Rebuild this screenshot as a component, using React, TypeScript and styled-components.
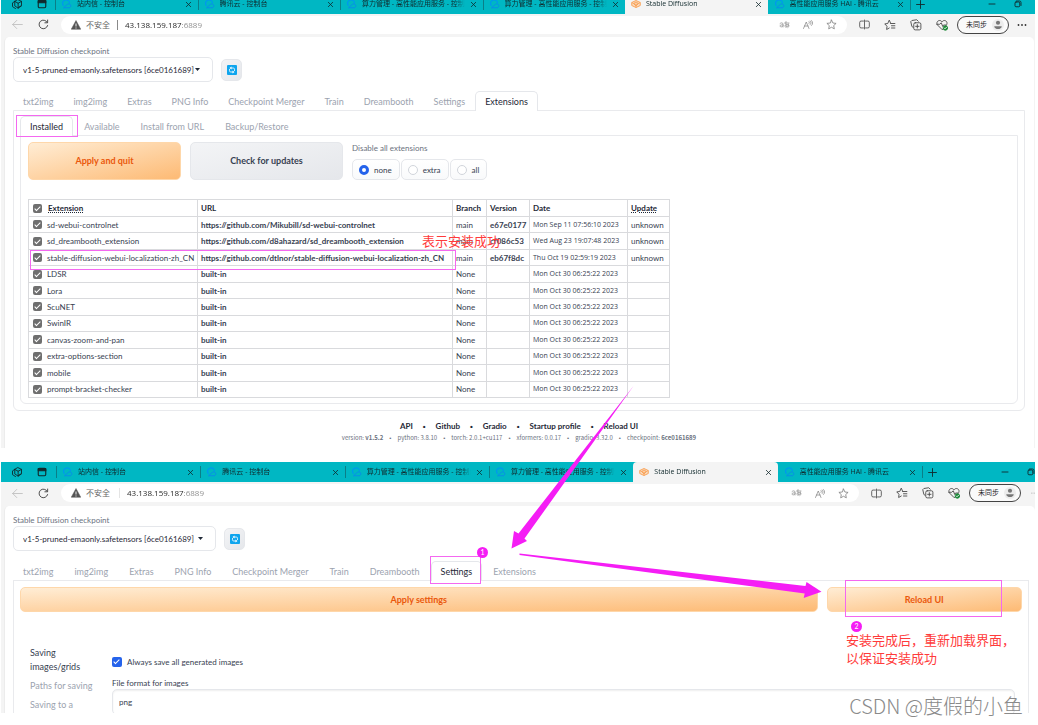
import React from "react";
import styled, { createGlobalStyle, css } from "styled-components";

const GlobalStyle = createGlobalStyle`
  *, *::before, *::after { box-sizing: border-box; }
  body { margin: 0; background: #fff; }
  button, input, select { font: inherit; color: inherit; margin: 0; padding: 0; border: 0; background: none; }
  a { color: inherit; text-decoration: none; }
`;

const uiFont = `Lato, "Noto Sans CJK SC", sans-serif`;
const noteFont = `"Noto Sans CJK SC", sans-serif`;
const chromeFont = `"Open Sans", "Noto Sans CJK SC", sans-serif`;

/* ---------- page ---------- */

const Page = styled.main`
  position: relative;
  display: flex;
  flex-direction: column;
  gap: 14px;
  padding: 0 3px 12px 1px;
  overflow: hidden;
  font-family: ${uiFont};
  color: #374151;
`;

const BrowserWindow = styled.section<{ $clip?: boolean }>`
  display: flex;
  flex-direction: column;
  background: #f4f4f4;
  overflow: hidden;
  ${(p) => p.$clip && css`height: 251px;`}
  & > * { flex: none; }
`;

/* ---------- browser chrome ---------- */

const TabStrip = styled.div<{ $cut?: boolean }>`
  display: flex;
  align-items: center;
  height: 20px;
  margin-top: ${(p) => (p.$cut ? "-6px" : "0")};
  background: #00b7c3;
  font-family: ${chromeFont};
  font-size: 7px;
  color: #10292c;
`;

const StripIcons = styled.div<{ $wide?: boolean }>`
  display: flex;
  align-items: center;
  gap: 14px;
  width: ${(p) => (p.$wide ? "55px" : "54px")};
  padding-left: 10px;
  flex: none;
`;

const TabList = styled.div<{ $wide?: boolean }>`
  display: grid;
  grid-template-columns: repeat(6, 1fr);
  width: ${(p) => (p.$wide ? "866px" : "855px")};
  height: 100%;
  flex: none;
`;

const BrowserTab = styled.div<{ $active?: boolean; $plain?: boolean }>`
  position: relative;
  display: flex;
  align-items: center;
  gap: 5px;
  min-width: 0;
  padding: 0 6px;
  ${(p) => p.$active && css`background: #f4f4f4; border-radius: 4px 4px 0 0;`}
  ${(p) => !p.$active && !p.$plain && css`
    &::before {
      content: "";
      position: absolute;
      left: 0;
      top: 4px;
      width: 1px;
      height: 12px;
      background: #0a7f88;
    }
  `}
`;

const TabTitle = styled.span`
  flex: 1;
  min-width: 0;
  overflow: hidden;
  white-space: nowrap;
  line-height: 12px;
  mask-image: linear-gradient(to right, #000 90%, transparent);
`;

const GlyphButton = styled.button`
  display: inline-flex;
  align-items: center;
  justify-content: center;
  flex: none;
  padding: 0;
  line-height: 0;
`;

const WindowButtons = styled.div<{ $wide?: boolean }>`
  display: flex;
  align-items: center;
  flex: 1;
  min-width: 0;
  border-left: 1px solid #0a7f88;
  height: 12px;
  padding: 0 ${(p) => (p.$wide ? "0" : "13px")} 0 5px;
  gap: 18px;
`;

const Spacer = styled.span`
  flex: 1;
`;

const Toolbar = styled.div<{ $wide?: boolean }>`
  display: flex;
  align-items: center;
  height: ${(p) => (p.$wide ? "24px" : "23px")};
  padding: 0 ${(p) => (p.$wide ? "0" : "8px")} 2px 11px;
  font-family: ${chromeFont};
  color: #4a4a4a;
`;

const NavButtons = styled.div`
  display: flex;
  align-items: center;
  gap: 15px;
  width: 49px;
  flex: none;
`;

const AddressBar = styled.div`
  display: flex;
  align-items: center;
  flex: 1;
  min-width: 0;
  height: 18px;
  padding: 0 10px;
  border-radius: 9px;
  background: #fff;
  font-size: 8px;
  line-height: 12px;
`;

const Insecure = styled.span<{ $faint?: boolean }>`
  display: flex;
  align-items: center;
  gap: 5px;
  padding-right: ${(p) => (p.$faint ? "9px" : "7px")};
  margin-right: 7px;
  border-right: 1px solid ${(p) => (p.$faint ? "#e4e4e4" : "#8a8a8a")};
  height: 10px;
  color: #666;
  white-space: nowrap;
`;

const UrlInput = styled.input`
  flex: 1;
  min-width: 0;
  outline: none;
  color: transparent;
  background: linear-gradient(to right, #222 57px, #8a8a8a 57px);
  background-clip: text;
  -webkit-background-clip: text;
`;

const AddressIcons = styled.div`
  display: flex;
  align-items: center;
  gap: 13px;
  color: #777;
`;

const ToolIcons = styled.div`
  display: flex;
  align-items: center;
  gap: 14px;
  padding: 0 9px 0 12px;
`;

const ProfileButton = styled.button`
  display: flex;
  align-items: center;
  justify-content: space-between;
  width: 52px;
  height: 18px;
  padding: 0 4px 0 8px;
  border: 1px solid #444;
  border-radius: 9px;
  font-size: 7px;
  line-height: 10px;
  color: #222;
  background: #fafafa;
  white-space: nowrap;
  flex: none;
`;

const MoreSlot = styled.span<{ $wide?: boolean }>`
  display: flex;
  margin-left: ${(p) => (p.$wide ? "10px" : "8px")};
  width: ${(p) => (p.$wide ? "4px" : "10px")};
  overflow: hidden;
  flex: none;
`;

/* ---------- web page ---------- */

const Card = styled.div<{ $wide?: boolean }>`
  display: flex;
  flex-direction: column;
  margin: 0 ${(p) => (p.$wide ? "0" : "1px")} 0 3px;
  padding: 8px ${(p) => (p.$wide ? "6px" : "9px")} 0 8px;
  border-left: 1px solid #ececec;
  border-radius: 5px 5px 0 0;
  background: #fff;
`;

const FieldLabel = styled.label`
  display: block;
  font-size: 8px;
  line-height: 12px;
  color: #6b7280;
`;

const CheckpointRow = styled.div<{ $wide?: boolean }>`
  display: flex;
  align-items: center;
  gap: 8px;
  margin-bottom: ${(p) => (p.$wide ? "10px" : "9px")};
`;

const SelectBox = styled.span<{ $wide?: boolean }>`
  display: flex;
  align-items: center;
  width: ${(p) => (p.$wide ? "203px" : "200px")};
  height: 25px;
  padding: 0 12px 0 9px;
  border: 1px solid #e5e7eb;
  border-radius: 5px;
  background: #fff;
`;

const CheckpointSelect = styled.select`
  flex: 1;
  min-width: 0;
  appearance: none;
  outline: none;
  font-size: 8px;
  line-height: 14px;
  color: #1f2937;
`;

const RefreshButton = styled.button`
  display: flex;
  align-items: center;
  justify-content: center;
  width: 21px;
  height: 22px;
  border: 1px solid #e5e7eb;
  border-radius: 5px;
  background: linear-gradient(to bottom right, #f3f4f6, #e5e7eb);
`;

const TabBar = styled.div<{ $gap?: number }>`
  position: relative;
  display: flex;
  gap: ${(p) => p.$gap ?? 0}px;
  height: 20px;
  margin-bottom: -1px;
`;

const TabButton = styled.button<{ $active?: boolean }>`
  padding: 0 9px;
  border: 1px solid transparent;
  border-bottom: 0;
  border-radius: 5px 5px 0 0;
  font-size: 9px;
  line-height: 18px;
  white-space: nowrap;
  color: #9ca3af;
  ${(p) => p.$active && css`
    background: #fff;
    border-color: #e5e7eb;
    color: #1f2937;
  `}
`;

const Panel = styled.div<{ $open?: boolean; $nested?: boolean }>`
  border: 1px solid #e9eaed;
  border-radius: 0 0 6px 6px;
  padding: 5px 6px 6px;
  ${(p) => p.$nested && css`padding: 6px 7px 5px;`}
  ${(p) => p.$open && css`border-bottom: 0; padding-top: 6px;`}
`;

const ActionRow = styled.div`
  display: flex;
  gap: 9px;
`;

const ActionButton = styled.button<{ $primary?: boolean; $grow?: number }>`
  width: 153px;
  ${(p) => p.$grow && css`flex: ${p.$grow} 1 0; width: auto;`}
  height: ${(p) => (p.$grow ? "25px" : "38px")};
  border: 1px solid ${(p) => (p.$primary ? "#fed7aa" : "#e5e7eb")};
  border-radius: 5px;
  font-weight: 700;
  font-size: 9px;
  line-height: 14px;
  color: ${(p) => (p.$primary ? "#ea580c" : "#374151")};
  background: ${(p) =>
    p.$primary
      ? "linear-gradient(to bottom right, #ffedd5, #fdba74)"
      : "linear-gradient(to bottom right, #f3f4f6, #e5e7eb)"};
`;

const RadioGroup = styled.fieldset`
  border: 0;
  margin: 0;
  padding: 0;
  min-width: 0;
`;

const Legend = styled.legend`
  padding: 0;
  font-size: 8px;
  line-height: 12px;
  margin-bottom: 5px;
  color: #6b7280;
`;

const RadioRow = styled.div`
  display: flex;
  gap: 1px;
`;

const RadioChip = styled.label`
  display: flex;
  align-items: center;
  gap: 5px;
  height: 21px;
  padding: 0 7px 0 6px;
  border: 1px solid #e5e7eb;
  border-radius: 5px;
  background: linear-gradient(#fff, #f9fafb);
  font-size: 8px;
  line-height: 12px;
`;

const Radio = styled.input`
  appearance: none;
  width: 10px;
  height: 10px;
  border: 1px solid #d1d5db;
  border-radius: 50%;
  background: #fff;
  &:checked { border: 3px solid #2563eb; }
`;

const Check = styled.input<{ $blue?: boolean }>`
  appearance: none;
  position: relative;
  flex: none;
  width: ${(p) => (p.$blue ? "10px" : "9px")};
  height: ${(p) => (p.$blue ? "10px" : "9px")};
  border-radius: 2px;
  background: ${(p) => (p.$blue ? "#2563eb" : "#6f6f6f")};
  &::after {
    content: "";
    position: absolute;
    left: 3px;
    top: 1px;
    width: 3px;
    height: 6px;
    border: solid #fff;
    border-width: 0 1px 1px 0;
    transform: rotate(45deg);
  }
`;

const ExtensionTable = styled.table`
  width: 641px;
  height: 199px;
  margin-top: 19px;
  border-collapse: collapse;
  table-layout: fixed;
  font-size: 8px;
  line-height: 12px;
  white-space: nowrap;
  th, td {
    padding: 0 3px;
    border: 1px solid #d9dadd;
    text-align: left;
    vertical-align: middle;
  }
  th { color: #1f2937; }
  thead tr { height: 17px; }
  tbody tr { height: 16px; }
`;

const DateCell = styled.td`
  font-family: ${chromeFont};
  font-size: 7px;
`;

const NameCell = styled.label<{ $head?: boolean }>`
  display: flex;
  align-items: center;
  gap: ${(p) => (p.$head ? "6px" : "5px")};
  padding-left: 1px;
`;

const Hint = styled.abbr`
  text-decoration: underline dotted;
`;

const Dot = styled.span`
  font-family: "Liberation Sans", sans-serif;
`;

const FooterLinks = styled.nav`
  display: flex;
  justify-content: center;
  gap: 10px;
  margin-top: 9px;
  font-size: 8px;
  font-weight: 700;
  line-height: 13px;
  color: #1f2937;
`;

const Versions = styled.p`
  display: flex;
  justify-content: center;
  gap: 6px;
  margin: 0;
  padding-bottom: 5px;
  font-family: ${noteFont};
  font-size: 6px;
  line-height: 10px;
  color: #6b7280;
`;

/* ---------- settings ---------- */

const SettingsBody = styled.div`
  display: flex;
  margin-top: 34px;
  padding: 0 7px 0 10px;
`;

const SideNav = styled.nav`
  display: flex;
  flex-direction: column;
  gap: 5px;
  width: 82px;
  flex: none;
  font-size: 9px;
  line-height: 14px;
`;

const SideLink = styled.a<{ $active?: boolean }>`
  width: 68px;
  color: ${(p) => (p.$active ? "#374151" : "#9ca3af")};
`;

const SettingsForm = styled.form`
  flex: 1;
  min-width: 0;
`;

const CheckLine = styled.label`
  display: flex;
  align-items: center;
  gap: 5px;
  margin: 10px 0;
  font-size: 8px;
  line-height: 12px;
`;

const FormatLabel = styled.label`
  display: block;
  font-size: 8px;
  line-height: 11px;
`;

const TextInput = styled.input`
  width: 100%;
  height: 26px;
  padding: 0 6px;
  border: 1px solid #e5e7eb;
  border-radius: 5px;
  box-shadow: inset 0 1px 2px #eee;
  font-size: 8px;
`;

/* ---------- annotations ---------- */

const Arrows = styled.svg`
  position: absolute;
  left: 0;
  top: 0;
  width: 1038px;
  height: 725px;
  pointer-events: none;
`;

type Box = { $x: number; $y: number; $w?: number; $h?: number };

const Highlight = styled.div<Box>`
  position: absolute;
  left: ${(p) => p.$x}px;
  top: ${(p) => p.$y}px;
  width: ${(p) => p.$w}px;
  height: ${(p) => p.$h}px;
  border: 1px solid #f468f0;
  pointer-events: none;
`;

const Badge = styled.span<Box>`
  position: absolute;
  left: ${(p) => p.$x}px;
  top: ${(p) => p.$y}px;
  width: 11px;
  height: 11px;
  border-radius: 50%;
  background: #f51df5;
  color: #fff;
  font-size: 7px;
  line-height: 11px;
  text-align: center;
`;

const RedNote = styled.p<Box>`
  position: absolute;
  left: ${(p) => p.$x}px;
  top: ${(p) => p.$y}px;
  margin: 0;
  font-family: ${noteFont};
  font-size: 13px;
  line-height: 18px;
  white-space: nowrap;
  color: #ff3b3b;
`;

const Watermark = styled.p`
  position: absolute;
  right: 15px;
  bottom: 5px;
  margin: 0;
  font-family: ${noteFont};
  font-size: 20px;
  font-weight: 300;
  line-height: 28px;
  white-space: nowrap;
  color: #8a8a8a;
`;

/* ---------- icons ---------- */

const Svg = ({ w = 11, h = w, vb = "0 0 16 16", sw = 1.3, children }: {
  w?: number; h?: number; vb?: string; sw?: number; children: React.ReactNode;
}) => (
  <svg width={w} height={h} viewBox={vb} fill="none" stroke="currentColor" strokeWidth={sw}
    strokeLinecap="round" strokeLinejoin="round" aria-hidden="true">{children}</svg>
);

const WorkspaceIcon = () => (
  <Svg w={12} sw={1.200}><path d="M5 4.500 9 2l5 2.500v5.500L10 12.500M5 4.500v6l4.500 3 4.500-3M5 4.500l4.500 2.500L14 4.500M9.500 7v6.500M5 4.500 2 6.500v5l4 2.500" /></Svg>
);
const TabPageIcon = () => (
  <Svg w={10} sw={1.800}><rect x="2" y="2" width="12" height="12" rx="2" /><path d="M2 2.500h12v3.500H2z" fill="currentColor" /></Svg>
);
const CloseIcon = () => <Svg w={7} sw={1.800}><path d="M3 3l10 10M13 3 3 13" /></Svg>;
const PlusIcon = () => <Svg w={9} sw={1.600}><path d="M8 1v14M1 8h14" /></Svg>;
const MinIcon = () => <Svg w={8} sw={1.800}><path d="M2 8h12" /></Svg>;
const RestoreIcon = () => (
  <Svg w={8} sw={1.800}><rect x="2" y="4" width="9.500" height="9.500" rx="2" /><path d="M5 2h6a3 3 0 0 1 3 3v6" /></Svg>
);
const CloudIcon = () => (
  <svg width="11" height="10" viewBox="0 0 22 20" aria-hidden="true">
    <path d="M4.500 13A7 7 0 1 1 17 7.500" fill="none" stroke="#0098ee" strokeWidth="2.500" strokeLinecap="round" />
    <path d="M5 17.500l7.500-6.500a4 4 0 1 1 4 6.500z" fill="none" stroke="#0a84f0" strokeWidth="2" strokeLinejoin="round" opacity=".8" />
  </svg>
);
const GradioIcon = () => (
  <svg width="10" height="10" viewBox="0 0 20 20" fill="none" stroke="#f9a55c" strokeWidth="2" strokeLinejoin="round" aria-hidden="true">
    <path d="M1.500 7 10 3l8.500 4L10 11zM1.500 7v6l8.500 4 8.500-4V7M10 11v6M5 9l5-3 5 3-5 5z" fill="#fbc99a" fillOpacity=".6" />
  </svg>
);
const BackIcon = () => <Svg w={11} sw={1.200}><path d="M15 8H1M7 2 1 8l6 6" stroke="#bcbcbc" /></Svg>;
const ReloadIcon = () => <Svg w={11} sw={1.400}><path d="M14 9.500A6.300 6.300 0 1 1 13.500 5M14 1.500V5.500h-4" /></Svg>;
const WarnIcon = () => (
  <svg width="10" height="10" viewBox="0 0 20 20" aria-hidden="true">
    <path d="M10 1 19.500 18.500H.5z" fill="#555" stroke="#555" strokeLinejoin="round" />
    <path d="M10 7v6M10 15v2" stroke="#fff" strokeWidth="1.800" />
  </svg>
);
const TranslateIcon = () => (
  <Svg vb="0 0 22 16" w={11} h={8} sw={1.200}>
    <path d="M2 5c2-2 6-2 6 1v6M8 8c-3-1-6 0-6 2s4 3 6 0M11 4h9M14 1c-1 5 0 9 2 11M19 6c0 4-3 7-6 6s0-6 4-5 4 4 1 6" />
  </Svg>
);
const ReadAloudIcon = () => (
  <Svg vb="0 0 20 18" w={10} h={9} sw={1.300}><path d="M1 17 6.500 4 12 17M3 12h7M12 3c1 1 1 3 0 4M14.500 2c2 2 2 5 0 7M17 1c3 3 3 7 0 10" /></Svg>
);
const StarPath = "M8 1.500l2 4.300 4.700.6-3.500 3.200.9 4.700L8 12l-4.100 2.300.9-4.700L1.300 6.400 6 5.800z";
const StarIcon = () => <Svg w={11} sw={1.100}><path d={StarPath} /></Svg>;
const SplitIcon = () => <Svg w={11} sw={1.200}><path d="M6.500 3H3a2 2 0 0 0-2 2v6a2 2 0 0 0 2 2h3.500M9.500 3H13a2 2 0 0 1 2 2v6a2 2 0 0 1-2 2H9.500M8 1.500v13" /></Svg>;
const FavoritesIcon = () => (
  <Svg w={12} sw={1.200}><path d="M9 6 7 1.500 5 6l-4 .5 3 3.200L3.500 14 7 12M9 6h5.500M10 9h4.500M10 12h4.500" /></Svg>
);
const CollectionsIcon = () => (
  <Svg w={12} sw={1.200}><path d="M4 11 2.500 10 1 3.500 2.500 2 9 1l2 2" /><rect x="5" y="5" width="9.500" height="9.500" rx="2" /><path d="M9.750 7.500v4.500M7.500 9.750h4.500" /></Svg>
);
const HeartIcon = () => (
  <Svg w={12} sw={1.200}>
    <path d="M8 14 2 8C0 5 2 2 5 2c2 0 3 2 3 2s1-2 3-2c3 0 5 3 3 6zM1 7h4l2-2 2 5 1-2h3" />
    <circle cx="12.500" cy="12" r="3" fill="#1f8a3b" stroke="#1f8a3b" /><path d="M11 12l1 1 2-2" stroke="#fff" />
  </Svg>
);
const PersonIcon = () => (
  <svg width="12" height="12" viewBox="0 0 16 16" aria-hidden="true">
    <circle cx="8" cy="8" r="8" fill="#ececec" /><circle cx="8" cy="5" r="2.800" fill="#777" /><path d="M3 9.500h10c0 5-10 5-10 0z" fill="#777" />
  </svg>
);
const DotsIcon = () => (
  <svg width="10" height="4" viewBox="0 0 10 4" aria-hidden="true" fill="#333">
    <circle cx="1.500" cy="2" r=".9" /><circle cx="5" cy="2" r=".9" /><circle cx="8.500" cy="2" r=".9" />
  </svg>
);
const CaretIcon = () => <svg width="5" height="3" viewBox="0 0 10 6" aria-hidden="true"><path d="M0 0h10L5 6z" fill="#1f2937" /></svg>;
const RefreshIcon = () => (
  <svg width="10" height="10" viewBox="0 0 20 20" aria-hidden="true">
    <rect width="20" height="20" rx="2" fill="#0ea5ee" />
    <path d="M8 6h4.500a2.500 2.500 0 0 1 2.500 2.500V12M12 14H7.500A2.500 2.500 0 0 1 5 11.500V8" fill="none" stroke="#fff" strokeWidth="1.600" />
    <path d="M9 3v6L5 6zM11 11v6l4-3z" fill="#fff" />
  </svg>
);

/* ---------- data ---------- */

const browserTabs = [
  "站内信 - 控制台",
  "腾讯云 - 控制台",
  "算力管理 - 高性能应用服务 - 控制台",
  "算力管理 - 高性能应用服务 - 控制台",
  "Stable Diffusion",
  "高性能应用服务 HAI - 腾讯云",
];
const mainTabs = ["txt2img", "img2img", "Extras", "PNG Info", "Checkpoint Merger", "Train", "Dreambooth", "Settings", "Extensions"];
const subTabs = ["Installed", "Available", "Install from URL", "Backup/Restore"];
const builtInDate = "Mon Oct 30 06:25:22 2023";
const extensions: string[][] = [
  ["sd-webui-controlnet", "https://github.com/Mikubill/sd-webui-controlnet", "main", "e67e0177", "Mon Sep 11 07:56:10 2023", "unknown"],
  ["sd_dreambooth_extension", "https://github.com/d8ahazard/sd_dreambooth_extension", "main", "cf086c53", "Wed Aug 23 19:07:48 2023", "unknown"],
  ["stable-diffusion-webui-localization-zh_CN", "https://github.com/dtlnor/stable-diffusion-webui-localization-zh_CN", "main", "eb67f8dc", "Thu Oct 19 02:59:19 2023", "unknown"],
  ...["LDSR", "Lora", "ScuNET", "SwinIR", "canvas-zoom-and-pan", "extra-options-section", "mobile", "prompt-bracket-checker"].map(
    (name) => [name, "built-in", "None", "", builtInDate, ""],
  ),
];
const footerLinks = ["API", "Github", "Gradio", "Startup profile", "Reload UI"];
const versions = [
  ["version", "v1.5.2"], ["python", "3.8.10"], ["torch", "2.0.1+cu117"],
  ["xformers", "0.0.17"], ["gradio", "3.32.0"], ["checkpoint", "6ce0161689"],
];

/* ---------- shared blocks ---------- */

const Chrome = ({ cut, wide }: { cut?: boolean; wide?: boolean }) => (
  <>
    <TabStrip $cut={cut}>
      <StripIcons $wide={wide}><WorkspaceIcon /><TabPageIcon /></StripIcons>
      <TabList $wide={wide}>
        {browserTabs.map((title, i) => (
          <BrowserTab key={i} $active={i === 4} $plain={i === 5}>
            {i === 4 ? <GradioIcon /> : <CloudIcon />}
            <TabTitle>{title}</TabTitle>
            <GlyphButton aria-label="Close tab"><CloseIcon /></GlyphButton>
          </BrowserTab>
        ))}
      </TabList>
      <WindowButtons $wide={wide}>
        <GlyphButton aria-label="New tab"><PlusIcon /></GlyphButton>
        <Spacer />
        <GlyphButton aria-label="Minimize"><MinIcon /></GlyphButton>
        <GlyphButton aria-label="Restore"><RestoreIcon /></GlyphButton>
      </WindowButtons>
    </TabStrip>
    <Toolbar $wide={wide}>
      <NavButtons>
        <GlyphButton aria-label="Back"><BackIcon /></GlyphButton>
        <GlyphButton aria-label="Reload"><ReloadIcon /></GlyphButton>
      </NavButtons>
      <AddressBar>
        <Insecure $faint={wide}><WarnIcon />不安全</Insecure>
        <UrlInput aria-label="Address" defaultValue="43.138.159.187:6889" />
        <AddressIcons><TranslateIcon /><ReadAloudIcon /><StarIcon /></AddressIcons>
      </AddressBar>
      <ToolIcons><SplitIcon /><FavoritesIcon /><CollectionsIcon /><HeartIcon /></ToolIcons>
      <ProfileButton>未同步<PersonIcon /></ProfileButton>
      <MoreSlot $wide={wide}><DotsIcon /></MoreSlot>
    </Toolbar>
  </>
);

const Checkpoint = ({ id, wide }: { id: string; wide?: boolean }) => (
  <>
    <FieldLabel htmlFor={id}>Stable Diffusion checkpoint</FieldLabel>
    <CheckpointRow $wide={wide}>
      <SelectBox $wide={wide}>
        <CheckpointSelect id={id}>
          <option>v1-5-pruned-emaonly.safetensors [6ce0161689]</option>
        </CheckpointSelect>
        <CaretIcon />
      </SelectBox>
      <RefreshButton aria-label="Refresh"><RefreshIcon /></RefreshButton>
    </CheckpointRow>
  </>
);

const Tabs = ({ items, active, gap }: { items: string[]; active: string; gap?: number }) => (
  <TabBar role="tablist" $gap={gap}>
    {items.map((t) => (
      <TabButton key={t} role="tab" aria-selected={t === active} $active={t === active}>{t}</TabButton>
    ))}
  </TabBar>
);

const separated = (nodes: React.ReactNode[]) =>
  nodes.flatMap((n, i) => (i ? [<Dot key={`s${i}`}>•</Dot>, n] : [n]));

export default function App() {
  return (
    <Page>
      <GlobalStyle />
      <BrowserWindow>
        <Chrome cut />
        <Card>
          <Checkpoint id="checkpoint-a" />
          <Tabs items={mainTabs} active="Extensions" />
          <Panel>
            <Tabs items={subTabs} active="Installed" gap={1} />
            <Panel $nested>
              <ActionRow>
                <ActionButton $primary>Apply and quit</ActionButton>
                <ActionButton>Check for updates</ActionButton>
                <RadioGroup>
                  <Legend>Disable all extensions</Legend>
                  <RadioRow>
                    {["none", "extra", "all"].map((v) => (
                      <RadioChip key={v}><Radio type="radio" name="disable" defaultChecked={v === "none"} />{v}</RadioChip>
                    ))}
                  </RadioRow>
                </RadioGroup>
              </ActionRow>
              <ExtensionTable>
                <colgroup>
                  {[169, 255, 34, 43, 98, 42].map((w, i) => <col key={i} width={w} />)}
                </colgroup>
                <thead>
                  <tr>
                    <th><NameCell $head><Check type="checkbox" defaultChecked /><Hint>Extension</Hint></NameCell></th>
                    <th>URL</th><th>Branch</th><th>Version</th><th>Date</th><th><Hint>Update</Hint></th>
                  </tr>
                </thead>
                <tbody>
                  {extensions.map(([name, url, branch, version, date, update]) => (
                    <tr key={name}>
                      <td><NameCell><Check type="checkbox" defaultChecked />{name}</NameCell></td>
                      <td>{url === "built-in" ? <b>{url}</b> : <a href={url}><b>{url}</b></a>}</td>
                      <td>{branch}</td><td><b>{version}</b></td><DateCell>{date}</DateCell><td>{update}</td>
                    </tr>
                  ))}
                </tbody>
              </ExtensionTable>
            </Panel>
          </Panel>
          <FooterLinks>
            {separated(footerLinks.map((l) => <a key={l} href="#">{l}</a>))}
          </FooterLinks>
          <Versions>
            {separated(versions.map(([k, v]) => (
              <span key={k}>{k}: {k === "version" || k === "checkpoint" ? <b>{v}</b> : v}</span>
            )))}
          </Versions>
        </Card>
      </BrowserWindow>

      <BrowserWindow $clip>
        <Chrome wide />
        <Card $wide>
          <Checkpoint id="checkpoint-b" wide />
          <Tabs items={mainTabs} active="Settings" gap={1} />
          <Panel $open>
            <ActionRow>
              <ActionButton $primary $grow={798}>Apply settings</ActionButton>
              <ActionButton $primary $grow={194}>Reload UI</ActionButton>
            </ActionRow>
            <SettingsBody>
              <SideNav>
                <SideLink href="#" $active>Saving images/grids</SideLink>
                <SideLink href="#">Paths for saving</SideLink>
                <SideLink href="#">Saving to a</SideLink>
              </SideNav>
              <SettingsForm>
                <CheckLine><Check type="checkbox" $blue defaultChecked />Always save all generated images</CheckLine>
                <FormatLabel htmlFor="format">File format for images</FormatLabel>
                <TextInput id="format" defaultValue="png" />
              </SettingsForm>
            </SettingsBody>
          </Panel>
        </Card>
      </BrowserWindow>

      <Highlight $x={16} $y={115} $w={62} $h={22} />
      <Highlight $x={30} $y={250} $w={426} $h={20} />
      <Highlight $x={430} $y={556} $w={51} $h={28} />
      <Highlight $x={845} $y={580} $w={157} $h={37} />
      <RedNote $x={422} $y={232}>表示安装成功</RedNote>
      <RedNote $x={846} $y={631}>安装完成后，重新加载界面，<br />以保证安装成功</RedNote>
      <Arrows viewBox="0 0 1038 725" fill="#f51df5" aria-hidden="true">
        <path d="M633.500 386 524.500 538.500 527 541 511.500 548.500 514 531 518.500 533.500z" />
        <path d="M519.500 553.500 805.500 586 806.500 582 821.500 591.700 803.700 598 804.700 593.500 519.500 555z" />
      </Arrows>
      <Badge $x={477} $y={547}>1</Badge>
      <Badge $x={851} $y={621}>2</Badge>
      <Watermark>CSDN @度假的小鱼</Watermark>
    </Page>
  );
}
